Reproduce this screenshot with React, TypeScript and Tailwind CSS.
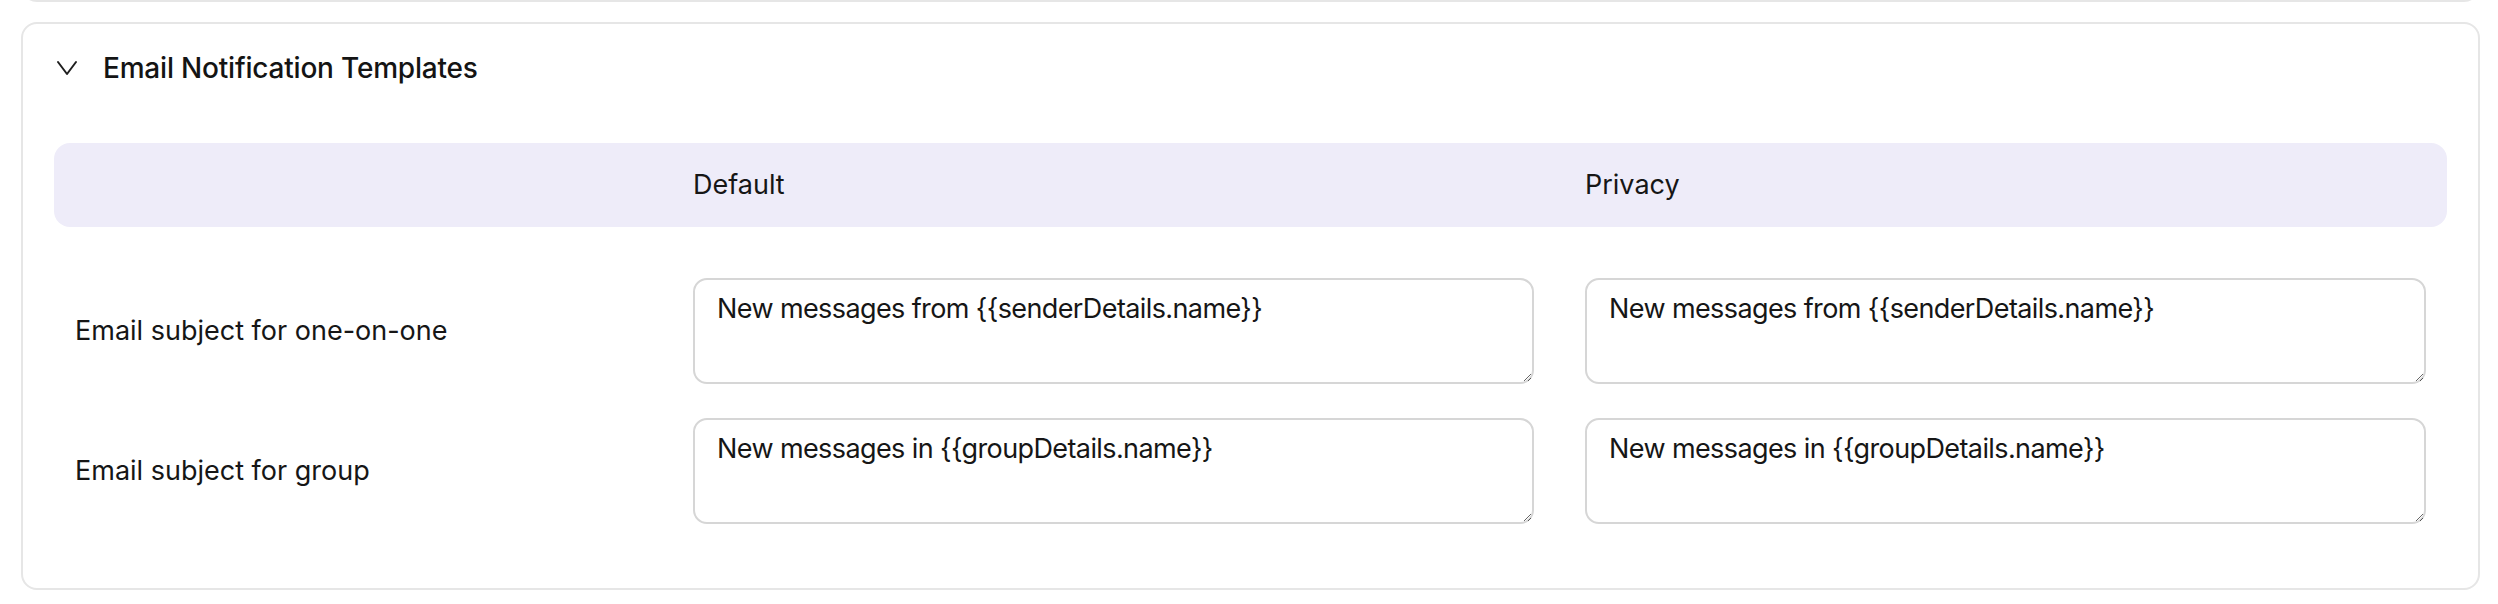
import { ChangeEvent, useState } from 'react';

type TemplateRow = {
  id: string;
  label: string;
  defaultText: string;
  privacyText: string;
};

const initialRows: TemplateRow[] = [
  {
    id: 'one-on-one',
    label: 'Email subject for one-on-one',
    defaultText: 'New messages from {{senderDetails.name}}',
    privacyText: 'New messages from {{senderDetails.name}}',
  },
  {
    id: 'group',
    label: 'Email subject for group',
    defaultText: 'New messages in {{groupDetails.name}}',
    privacyText: 'New messages in {{groupDetails.name}}',
  },
];

function ChevronDown() {
  return (
    <svg width="22" height="16" viewBox="0 0 22 16" fill="none" className="shrink-0">
      <polyline points="2,2 11,14 20,2" stroke="#1f1f1f" strokeWidth="2" strokeLinecap="round" strokeLinejoin="round" />
    </svg>
  );
}

function TemplateInput({ value, onChange }: { value: string; onChange: (v: string) => void }) {
  return (
    <textarea
      value={value}
      onChange={(e: ChangeEvent<HTMLTextAreaElement>) => onChange(e.target.value)}
      className="h-[106px] w-full rounded-[14px] border-2 border-[#d6d6d6] bg-white pl-[22px] pr-[16px] pt-[12px] text-[27px] leading-[33px] tracking-[-0.6px] text-[#161616] outline-none resize-y"
    />
  );
}

function TemplatesCard() {
  const [rows, setRows] = useState(initialRows);
  const [open, setOpen] = useState(true);

  const update = (id: string, key: 'defaultText' | 'privacyText', v: string) => {
    setRows((prev) => prev.map((r) => (r.id === id ? { ...r, [key]: v } : r)));
  };

  return (
    <section className="rounded-2xl border-2 border-[#e6e6e6] bg-white">
      <button
        onClick={() => setOpen((o) => !o)}
        className="flex h-[88px] w-full items-center gap-[25px] pl-[33px] text-left"
      >
        <ChevronDown />
        <h2 className="text-[28px] font-medium leading-[34px] tracking-[-0.2px] text-[#141414]">
          Email Notification Templates
        </h2>
      </button>

      {open && (
        <div className="px-[31px] pt-[31px] pb-[64px]">
          <div className="grid h-[84px] grid-cols-[567px_1fr_1fr] items-center gap-x-[51px] rounded-2xl bg-[#eeecf9] px-[21px] text-[27px] text-[#161616]">
            <span />
            <span>Default</span>
            <span>Privacy</span>
          </div>

          <div className="mt-[51px] flex flex-col gap-[34px]">
            {rows.map((r) => (
              <div key={r.id} className="grid grid-cols-[567px_1fr_1fr] items-center gap-x-[51px] px-[21px]">
                <span className="text-[27px] text-[#161616]">{r.label}</span>
                <TemplateInput value={r.defaultText} onChange={(v) => update(r.id, 'defaultText', v)} />
                <TemplateInput value={r.privacyText} onChange={(v) => update(r.id, 'privacyText', v)} />
              </div>
            ))}
          </div>
        </div>
      )}
    </section>
  );
}

export default function App() {
  return (
    <div className="h-[604px] overflow-hidden bg-white font-['Inter',sans-serif] text-[#161616]">
      {/* previous settings section, scrolled mostly out of view */}
      <div className="-mt-[88px] ml-[21px] mr-[18px] flex flex-col gap-[20px]">
        <section className="h-[90px] rounded-2xl border-2 border-[#e6e6e6] bg-white" />
        <TemplatesCard />
      </div>
    </div>
  );
}
